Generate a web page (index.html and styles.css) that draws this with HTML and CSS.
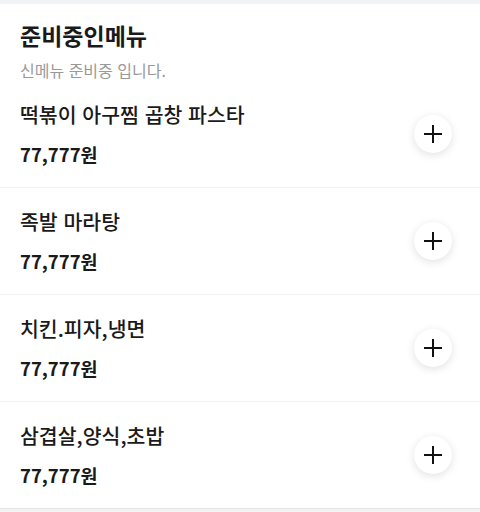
FILE: index.html
```html
<!DOCTYPE html>
<html lang="ko">
<head>
    <meta charset="UTF-8">
    <meta name="viewport" content="width=device-width, initial-scale=1.0">
    <title>준비중인메뉴</title>
    <link rel="stylesheet" href="styles.css">
</head>
<body>

    <div class="section">
        <div class="section-head">
            <h2>준비중인메뉴</h2>
            <p class="desc">신메뉴 준비중 입니다.</p>
        </div>

        <ul class="menu-list">
            <li class="menu-item">
                <div class="menu-info">
                    <div class="menu-name">떡볶이 아구찜 곱창 파스타</div>
                    <div class="menu-price">77,777원</div>
                </div>
                <button class="add-button" aria-label="추가">
                    <svg width="22" height="22" viewBox="0 0 22 22"><path d="M11 2v18M2 11h18" stroke="#111" stroke-width="2" fill="none"/></svg>
                </button>
            </li>
            <li class="menu-item">
                <div class="menu-info">
                    <div class="menu-name">족발 마라탕</div>
                    <div class="menu-price">77,777원</div>
                </div>
                <button class="add-button" aria-label="추가">
                    <svg width="22" height="22" viewBox="0 0 22 22"><path d="M11 2v18M2 11h18" stroke="#111" stroke-width="2" fill="none"/></svg>
                </button>
            </li>
            <li class="menu-item">
                <div class="menu-info">
                    <div class="menu-name">치킨.피자,냉면</div>
                    <div class="menu-price">77,777원</div>
                </div>
                <button class="add-button" aria-label="추가">
                    <svg width="22" height="22" viewBox="0 0 22 22"><path d="M11 2v18M2 11h18" stroke="#111" stroke-width="2" fill="none"/></svg>
                </button>
            </li>
            <li class="menu-item">
                <div class="menu-info">
                    <div class="menu-name">삼겹살,양식,초밥</div>
                    <div class="menu-price">77,777원</div>
                </div>
                <button class="add-button" aria-label="추가">
                    <svg width="22" height="22" viewBox="0 0 22 22"><path d="M11 2v18M2 11h18" stroke="#111" stroke-width="2" fill="none"/></svg>
                </button>
            </li>
        </ul>
    </div>

</body>
</html>
```

FILE: styles.css
```css
body {
    font-family: "Noto Sans CJK KR", "Noto Sans", sans-serif;
    background-color: #f2f3f5;
    color: #1a1a1a;
    margin: 0;
    padding: 4px 0 0;
}
.section {
    background-color: #fff;
    border-bottom: 1px solid #e4e4e4;
}
.section-head {
    padding: 16px 20px 0;
}
h2 {
    margin: 0;
    font-size: 23px;
    font-weight: 700;
    line-height: 30px;
}
.desc {
    margin: 9px 0 0;
    font-size: 16px;
    color: #999;
    line-height: 22px;
}
.menu-list {
    list-style: none;
    margin: 0;
    padding: 0;
}
.menu-item {
    display: flex;
    align-items: center;
    justify-content: space-between;
    padding: 21px 28px 21px 20px;
    border-bottom: 1px solid #f2f2f2;
}
.menu-item:last-child {
    border-bottom: none;
}
.menu-name {
    font-size: 20.5px;
    font-weight: 500;
    line-height: 24px;
}
.menu-price {
    margin-top: 16px;
    font-size: 18.5px;
    font-weight: 700;
    line-height: 24px;
}
.add-button {
    width: 38px;
    height: 38px;
    border: none;
    border-radius: 50%;
    background-color: #fff;
    box-shadow: 0 2px 8px rgba(0, 0, 0, 0.12);
    display: flex;
    align-items: center;
    justify-content: center;
    padding: 0;
    cursor: pointer;
}
```
